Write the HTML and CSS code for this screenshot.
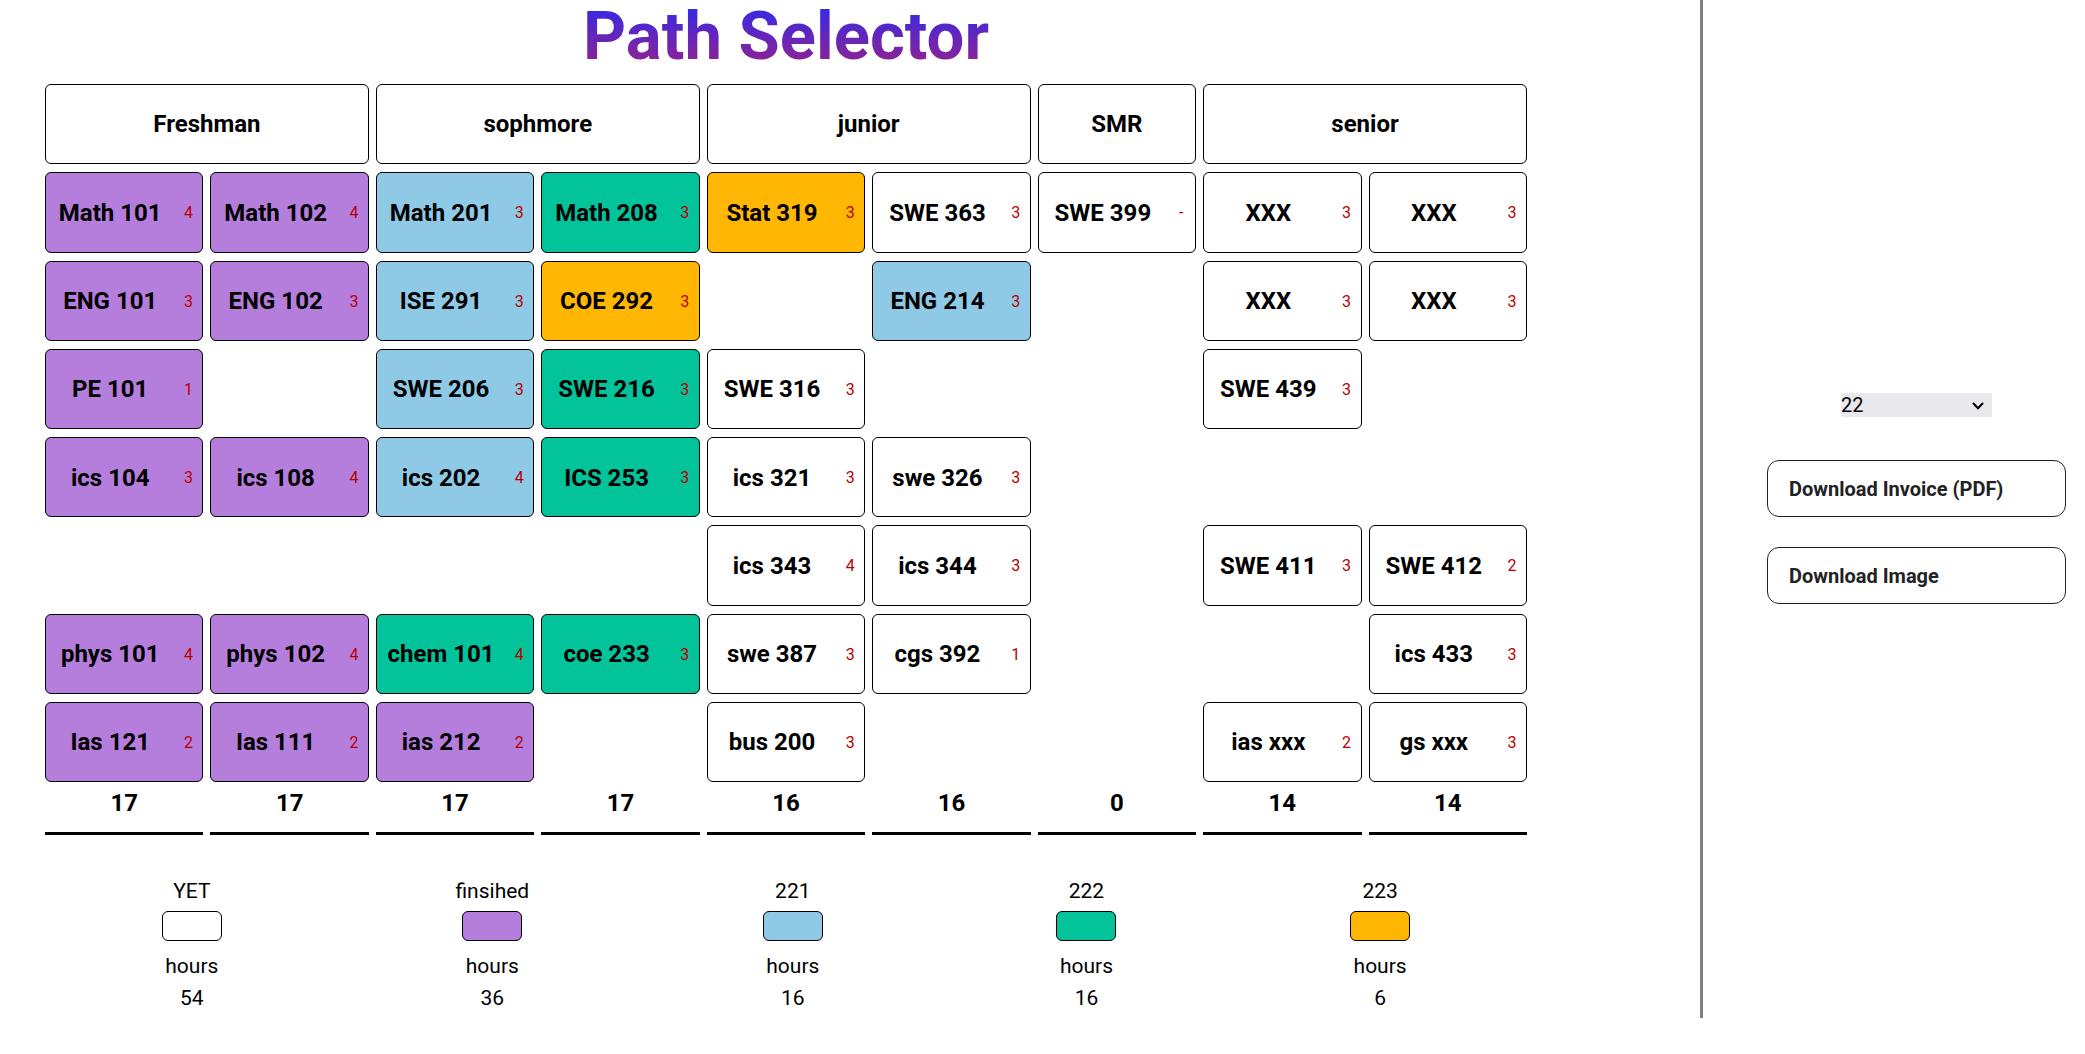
FILE: index.html
```html
<!DOCTYPE html>
<html lang="en">
<head>
<meta charset="utf-8">
<title>Path Selector</title>
<link rel="stylesheet" href="styles.css">
</head>
<body>
<div class="layout">
<main class="planner">
<h1 class="title">Path Selector</h1>
<div class="plan">
<div class="year span-2">Freshman</div>
<div class="year span-2">sophmore</div>
<div class="year span-2">junior</div>
<div class="year">SMR</div>
<div class="year span-2">senior</div>

<button class="course finished"><span class="name">Math 101</span><span class="credits">4</span></button>
<button class="course finished"><span class="name">Math 102</span><span class="credits">4</span></button>
<button class="course term-221"><span class="name">Math 201</span><span class="credits">3</span></button>
<button class="course term-222"><span class="name">Math 208</span><span class="credits">3</span></button>
<button class="course term-223"><span class="name">Stat 319</span><span class="credits">3</span></button>
<button class="course"><span class="name">SWE 363</span><span class="credits">3</span></button>
<button class="course"><span class="name">SWE 399</span><span class="credits">-</span></button>
<button class="course"><span class="name">XXX</span><span class="credits">3</span></button>
<button class="course"><span class="name">XXX</span><span class="credits">3</span></button>

<button class="course finished"><span class="name">ENG 101</span><span class="credits">3</span></button>
<button class="course finished"><span class="name">ENG 102</span><span class="credits">3</span></button>
<button class="course term-221"><span class="name">ISE 291</span><span class="credits">3</span></button>
<button class="course term-223"><span class="name">COE 292</span><span class="credits">3</span></button>
<div class="empty"></div>
<button class="course term-221"><span class="name">ENG 214</span><span class="credits">3</span></button>
<div class="empty"></div>
<button class="course"><span class="name">XXX</span><span class="credits">3</span></button>
<button class="course"><span class="name">XXX</span><span class="credits">3</span></button>

<button class="course finished"><span class="name">PE 101</span><span class="credits">1</span></button>
<div class="empty"></div>
<button class="course term-221"><span class="name">SWE 206</span><span class="credits">3</span></button>
<button class="course term-222"><span class="name">SWE 216</span><span class="credits">3</span></button>
<button class="course"><span class="name">SWE 316</span><span class="credits">3</span></button>
<div class="empty"></div>
<div class="empty"></div>
<button class="course"><span class="name">SWE 439</span><span class="credits">3</span></button>
<div class="empty"></div>

<button class="course finished"><span class="name">ics 104</span><span class="credits">3</span></button>
<button class="course finished"><span class="name">ics 108</span><span class="credits">4</span></button>
<button class="course term-221"><span class="name">ics 202</span><span class="credits">4</span></button>
<button class="course term-222"><span class="name">ICS 253</span><span class="credits">3</span></button>
<button class="course"><span class="name">ics 321</span><span class="credits">3</span></button>
<button class="course"><span class="name">swe 326</span><span class="credits">3</span></button>
<div class="empty"></div>
<div class="empty"></div>
<div class="empty"></div>

<div class="empty"></div>
<div class="empty"></div>
<div class="empty"></div>
<div class="empty"></div>
<button class="course"><span class="name">ics 343</span><span class="credits">4</span></button>
<button class="course"><span class="name">ics 344</span><span class="credits">3</span></button>
<div class="empty"></div>
<button class="course"><span class="name">SWE 411</span><span class="credits">3</span></button>
<button class="course"><span class="name">SWE 412</span><span class="credits">2</span></button>

<button class="course finished"><span class="name">phys 101</span><span class="credits">4</span></button>
<button class="course finished"><span class="name">phys 102</span><span class="credits">4</span></button>
<button class="course term-222"><span class="name">chem 101</span><span class="credits">4</span></button>
<button class="course term-222"><span class="name">coe 233</span><span class="credits">3</span></button>
<button class="course"><span class="name">swe 387</span><span class="credits">3</span></button>
<button class="course"><span class="name">cgs 392</span><span class="credits">1</span></button>
<div class="empty"></div>
<div class="empty"></div>
<button class="course"><span class="name">ics 433</span><span class="credits">3</span></button>

<button class="course finished"><span class="name">Ias 121</span><span class="credits">2</span></button>
<button class="course finished"><span class="name">Ias 111</span><span class="credits">2</span></button>
<button class="course finished"><span class="name">ias 212</span><span class="credits">2</span></button>
<div class="empty"></div>
<button class="course"><span class="name">bus 200</span><span class="credits">3</span></button>
<div class="empty"></div>
<div class="empty"></div>
<button class="course"><span class="name">ias xxx</span><span class="credits">2</span></button>
<button class="course"><span class="name">gs xxx</span><span class="credits">3</span></button>
</div>

<div class="totals">
<div class="total">17</div>
<div class="total">17</div>
<div class="total">17</div>
<div class="total">17</div>
<div class="total">16</div>
<div class="total">16</div>
<div class="total">0</div>
<div class="total">14</div>
<div class="total">14</div>
</div>

<div class="legend">
<div class="legend-item"><span>YET</span><button class="swatch" aria-label="YET"></button><span>hours</span><span>54</span></div>
<div class="legend-item"><span>finsihed</span><button class="swatch finished" aria-label="finsihed"></button><span>hours</span><span>36</span></div>
<div class="legend-item"><span>221</span><button class="swatch term-221" aria-label="221"></button><span>hours</span><span>16</span></div>
<div class="legend-item"><span>222</span><button class="swatch term-222" aria-label="222"></button><span>hours</span><span>16</span></div>
<div class="legend-item"><span>223</span><button class="swatch term-223" aria-label="223"></button><span>hours</span><span>6</span></div>
</div>
</main>

<aside class="sidebar">
<div class="select-box">
<select class="year-select" aria-label="Year"><option>22</option></select>
<svg class="chevron" width="12" height="8" viewBox="0 0 12 8" aria-hidden="true"><path d="M1.5 1.500 6 6.200l4.500-4.700" fill="none" stroke="#000" stroke-width="2" stroke-linecap="round"/></svg>
</div>
<button class="download">Download Invoice (PDF)</button>
<button class="download">Download Image</button>
</aside>
</div>
</body>
</html>
```
FILE: styles.css
```css
* {
  box-sizing: border-box;
}

body {
  margin: 0;
  background: #fff;
  color: #000;
  font-family: Roboto, "Liberation Sans", sans-serif;
}

button,
select {
  font-family: inherit;
  color: inherit;
}

.layout {
  display: grid;
  grid-template-columns: 1fr 382px;
}

.planner {
  padding: 0 173px 4px 45px;
  border-right: 3px solid #808080;
}

.title {
  margin: 0 0 12px;
  font-size: 67px;
  line-height: 72px;
  text-align: center;
  background: linear-gradient(#2b2bf0, #9b2187);
  background-clip: text;
  -webkit-background-clip: text;
  color: transparent;
}

.plan {
  display: grid;
  grid-template-columns: repeat(9, 1fr);
  grid-template-rows: repeat(8, 1fr);
  gap: 8px 7px;
  min-height: 698px;
}

.year,
.course {
  display: flex;
  align-items: center;
  min-width: 0;
  padding: 0;
  border: 1px solid #000;
  border-radius: 6px;
  background: #fff;
  font-size: 24px;
  font-weight: 700;
}

.year {
  justify-content: center;
}

.course {
  padding-top: 1px;
}

.span-2 {
  grid-column: span 2;
}

.name {
  flex: 1;
  text-align: center;
}

.credits {
  width: 28px;
  font-size: 16px;
  font-weight: 400;
  text-align: center;
  color: #b90000;
}

.finished {
  background: #b57edc;
}

.term-221 {
  background: #8ecae6;
}

.term-222 {
  background: #02c39a;
}

.term-223 {
  background: #ffb703;
}

.totals {
  display: grid;
  grid-template-columns: repeat(9, 1fr);
  gap: 7px;
}

.total {
  padding: 5px 0 13px;
  border-bottom: 3px solid #000;
  font-size: 24px;
  font-weight: 700;
  line-height: 32px;
  text-align: center;
}

.legend {
  display: flex;
  justify-content: space-around;
  margin-top: 40px;
}

.legend-item {
  display: flex;
  flex-direction: column;
  align-items: center;
  font-size: 21px;
  line-height: 32px;
}

.swatch {
  width: 60px;
  height: 30px;
  margin: 4px 0 9px;
  padding: 0;
  border: 1px solid #000;
  border-radius: 6px;
  background-color: #fff;
}

.swatch.finished {
  background: #b57edc;
}

.swatch.term-221 {
  background: #8ecae6;
}

.swatch.term-222 {
  background: #02c39a;
}

.swatch.term-223 {
  background: #ffb703;
}

.sidebar {
  display: flex;
  flex-direction: column;
  align-items: center;
  gap: 30px;
  padding: 393px 19px 0 64px;
}

.select-box {
  position: relative;
  width: 151px;
  margin-bottom: 13px;
}

.year-select {
  display: block;
  width: 100%;
  height: 24px;
  padding: 0;
  border: 0;
  border-radius: 0;
  appearance: none;
  background: #e9e9ed;
  font-size: 20px;
}

.chevron {
  position: absolute;
  top: 9px;
  right: 8px;
  pointer-events: none;
}

.download {
  width: 100%;
  height: 57px;
  padding: 0 21px;
  border: 1px solid #222;
  border-radius: 12px;
  background: #fff;
  color: #222;
  font-size: 20px;
  font-weight: 700;
  text-align: left;
}
```
